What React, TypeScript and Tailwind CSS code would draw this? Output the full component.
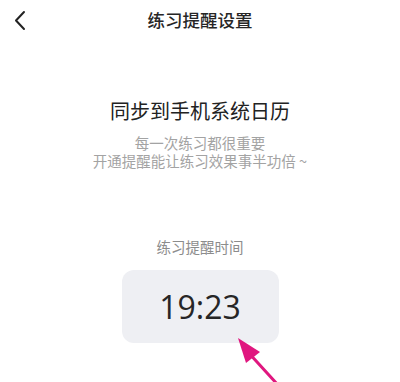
export default function App() {
  return (
    <div
      className="relative w-[400px] h-[382px] overflow-hidden bg-white"
      style={{ fontFamily: '"Noto Sans CJK SC", "Noto Sans", sans-serif' }}
    >
      <header className="relative h-10 flex items-center justify-center">
        <button className="absolute left-[12px] top-[10px] p-0">
          <svg width="16" height="21" viewBox="0 0 16 21" fill="none">
            <path d="M12 2 L4 10.5 L12 19" stroke="#222" strokeWidth="2" strokeLinecap="round" strokeLinejoin="round" />
          </svg>
        </button>
        <h1 className="text-[17.5px] leading-none font-medium text-[#262626]">练习提醒设置</h1>
      </header>

      <section className="flex flex-col items-center pt-[59px]">
        <h2 className="text-[20px] leading-[24px] text-[#222]">同步到手机系统日历</h2>
        <div className="mt-[11px] flex flex-col items-center text-[14.5px] leading-[18px] text-[#a3a3a3]">
          <p>每一次练习都很重要</p>
          <p>开通提醒能让练习效果事半功倍 ~</p>
        </div>
      </section>

      <section className="flex flex-col items-center pt-[68px]">
        <p className="text-[14.5px] leading-[18px] text-[#8c8c8c]">练习提醒时间</p>
        <div className="mt-[14px] w-[157px] h-[73px] rounded-[12px] bg-[#eeeff3] flex items-center justify-center">
          <span
            className="text-[32px] leading-none text-[#262626]"
            style={{ fontFamily: '"Open Sans", "Noto Sans", sans-serif' }}
          >
            19:23
          </span>
        </div>
      </section>

      <svg className="absolute left-0 top-0 pointer-events-none" width="400" height="382" viewBox="0 0 400 382">
        <line x1="278" y1="385" x2="247" y2="351" stroke="#e0177f" strokeWidth="3" strokeLinecap="round" />
        <polygon points="238,338 260,352 246,363" fill="#e0177f" />
      </svg>
    </div>
  );
}
